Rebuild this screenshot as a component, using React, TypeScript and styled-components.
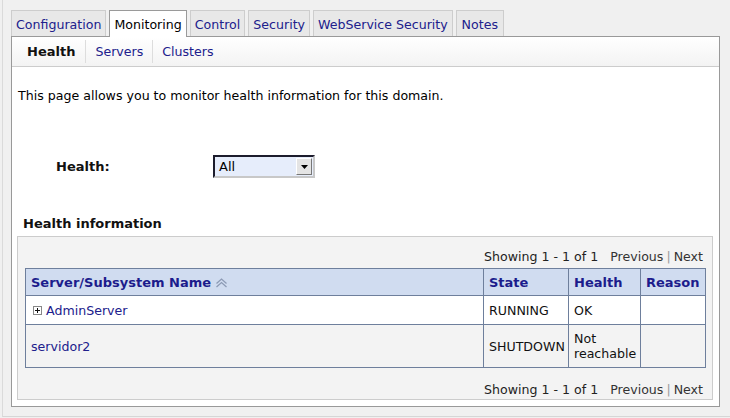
import React from "react";
import styled, { createGlobalStyle } from "styled-components";

const Global = createGlobalStyle`
  html, body { margin: 0; padding: 0; background: #f0f0f0; }
  body { font-family: "DejaVu Sans", Verdana, sans-serif; font-size: 12.6px; color: #000; }
  * { box-sizing: border-box; }
`;

const Frame = styled.div`
  margin-left: 2px;
  height: 417px;
  border-left: 1px solid #dadada;
  border-bottom: 1px solid #d6d6d6;
  padding: 10px 10px 0 8px;
`;

const TabBar = styled.div`
  display: flex;
  align-items: flex-end;
  gap: 3px;
  height: 26px;
`;

const Tab = styled.div<{ $active?: boolean }>`
  height: ${(p) => (p.$active ? "27px" : "26px")};
  margin-bottom: ${(p) => (p.$active ? "-1px" : "0")};
  position: relative;
  z-index: ${(p) => (p.$active ? 1 : 0)};
  padding: 0 4px;
  min-width: 48px;
  justify-content: center;
  display: flex;
  align-items: center;
  padding-top: 1px;
  padding-bottom: ${(p) => (p.$active ? "1px" : "0")};
  background: ${(p) => (p.$active ? "#ffffff" : "#e8e8e8")};
  border: 1px solid ${(p) => (p.$active ? "#9a9a9a" : "#cdcdcd")};
  border-bottom: none;
  color: ${(p) => (p.$active ? "#000" : "#20208c")};
  white-space: nowrap;
  line-height: 15px;
`;

const Panel = styled.div`
  border: 1px solid #999999;
  background: #ffffff;
  height: 371px;
  display: flex;
  flex-direction: column;
`;

const SubBar = styled.div`
  display: flex;
  align-items: center;
  height: 30px;
  padding-left: 5px;
  border-bottom: 1px solid #cccccc;
  background: linear-gradient(#ffffff, #f3f3f3);
`;

const SubTab = styled.div<{ $active?: boolean; $first?: boolean }>`
  padding: 0 9px 0 ${(p) => (p.$first ? "10px" : "9px")};
  padding-right: ${(p) => (p.$first ? "10px" : "9px")};
  border-left: ${(p) => (p.$first ? "none" : "1px solid #dddddd")};
  height: 23px;
  display: flex;
  align-items: center;
  font-weight: ${(p) => (p.$active ? "bold" : "normal")};
  font-size: ${(p) => (p.$active ? "13px" : "12.6px")};
  color: ${(p) => (p.$active ? "#111" : "#20208c")};
`;

const Content = styled.div`
  flex: 1;
  display: flex;
  flex-direction: column;
  padding: 0 6px 6px 5px;
`;

const Intro = styled.p`
  margin: 21px 0 0 1px;
  line-height: 15px;
`;

const FormRow = styled.div`
  display: flex;
  align-items: center;
  margin-top: 52px;
  height: 23px;
`;

const Label = styled.div`
  width: 157px;
  margin-left: 39px;
  font-weight: bold;
  font-size: 13px;
  color: #111;
`;

const SelectBox = styled.div`
  width: 102px;
  height: 23px;
  display: flex;
  align-items: stretch;
  border-top: 2px solid #1c1c2c;
  border-left: 2px solid #1c1c2c;
  border-right: 2px solid #c8c8c8;
  border-bottom: 2px solid #c8c8c8;
  background: #e6edfb;
`;

const SelectValue = styled.div`
  flex: 1;
  padding-left: 4px;
  display: flex;
  align-items: center;
  line-height: 15px;
  font-size: 13px;
`;

const SelectButton = styled.div`
  width: 16px;
  margin: 1px;
  background: #e4e4e4;
  border-top: 1px solid #ffffff;
  border-left: 1px solid #ffffff;
  border-right: 1px solid #777;
  border-bottom: 1px solid #777;
  display: flex;
  align-items: center;
  justify-content: center;
`;

const Heading = styled.h3`
  margin: 38px 0 0 6px;
  font-size: 13px;
  font-weight: bold;
  line-height: 15px;
  color: #111;
`;

const InfoBox = styled.div`
  margin-top: 5px;
  border: 1px solid #cccccc;
  background: #f3f3f3;
  padding: 0 6px 2px 7px;
`;

const Pager = styled.div<{ $bottom?: boolean }>`
  display: flex;
  justify-content: flex-end;
  align-items: center;
  line-height: 15px;
  height: 15px;
  color: #222;
  padding-right: 3px;
  margin-top: ${(p) => (p.$bottom ? "14px" : "12px")};
  margin-bottom: ${(p) => (p.$bottom ? "0" : "4px")};
`;

const PagerNav = styled.span`
  margin-left: 12px;
  color: #333;
`;

const Sep = styled.span`
  color: #999;
  margin: 0 3px;
`;

const Table = styled.table`
  width: 100%;
  border-collapse: collapse;
  table-layout: fixed;
  border: 1px solid #6e7f9c;
`;

const Th = styled.th<{ $w?: number }>`
  width: ${(p) => (p.$w ? `${p.$w}px` : "auto")};
  height: 27px;
  padding: 0 5px;
  text-align: left;
  background: #d0dcf0;
  color: #1c1c8c;
  font-weight: bold;
  font-size: 13px;
  border: 1px solid #6e7f9c;
  white-space: nowrap;
  line-height: 15px;
`;

const Tr = styled.tr<{ $alt?: boolean; $h: number }>`
  background: ${(p) => (p.$alt ? "#f3f3f3" : "#ffffff")};
  height: ${(p) => p.$h}px;
`;

const Td = styled.td`
  padding: 0 4px 0 5px;
  border: 1px solid #6e7f9c;
  line-height: 15px;
  color: #111;
  vertical-align: middle;
`;

const LinkText = styled.span`
  color: #20208c;
`;

const NameCell = styled.span`
  display: inline-flex;
  align-items: center;
  gap: 4px;
`;

const SortIcon = () => (
  <svg width="13" height="10" viewBox="0 0 13 10" style={{ marginLeft: 4, verticalAlign: "-1px" }}>
    <path d="M1.5 5.5 L6.5 1 L11.5 5.5 M1.5 9 L6.5 4.5 L11.5 9" fill="none" stroke="#8d9bb5" strokeWidth="1.3" />
  </svg>
);

const ExpandIcon = () => (
  <svg width="9" height="9" viewBox="0 0 9 9" style={{ marginLeft: 2 }}>
    <rect x="0.5" y="0.5" width="8" height="8" fill="#fff" stroke="#888" />
    <path d="M2 4.5 H7 M4.5 2 V7" stroke="#111" strokeWidth="1" />
  </svg>
);

const Arrow = () => (
  <svg width="7" height="4" viewBox="0 0 7 4">
    <path d="M0 0 H7 L3.5 4 Z" fill="#000" />
  </svg>
);

const PagerLine = ({ bottom }: { bottom?: boolean }) => (
  <Pager $bottom={bottom}>
    <span>Showing 1 - 1 of 1</span>
    <PagerNav>
      Previous<Sep>|</Sep>Next
    </PagerNav>
  </Pager>
);

export default function App() {
  const tabs = ["Configuration", "Monitoring", "Control", "Security", "WebService Security", "Notes"];
  return (
    <>
      <Global />
      <Frame>
        <TabBar>
          {tabs.map((t) => (
            <Tab key={t} $active={t === "Monitoring"}>
              {t}
            </Tab>
          ))}
        </TabBar>
        <Panel>
          <SubBar>
            <SubTab $active $first>
              Health
            </SubTab>
            <SubTab>Servers</SubTab>
            <SubTab>Clusters</SubTab>
          </SubBar>
          <Content>
            <Intro>This page allows you to monitor health information for this domain.</Intro>
            <FormRow>
              <Label>Health:</Label>
              <SelectBox>
                <SelectValue>All</SelectValue>
                <SelectButton>
                  <Arrow />
                </SelectButton>
              </SelectBox>
            </FormRow>
            <Heading>Health information</Heading>
            <InfoBox>
              <PagerLine />
              <Table>
                <thead>
                  <tr>
                    <Th>
                      Server/Subsystem Name
                      <SortIcon />
                    </Th>
                    <Th $w={85}>State</Th>
                    <Th $w={72}>Health</Th>
                    <Th $w={65}>Reason</Th>
                  </tr>
                </thead>
                <tbody>
                  <Tr $h={29}>
                    <Td>
                      <NameCell>
                        <ExpandIcon />
                        <LinkText>AdminServer</LinkText>
                      </NameCell>
                    </Td>
                    <Td>RUNNING</Td>
                    <Td>OK</Td>
                    <Td></Td>
                  </Tr>
                  <Tr $h={43} $alt>
                    <Td>
                      <LinkText>servidor2</LinkText>
                    </Td>
                    <Td>SHUTDOWN</Td>
                    <Td>Not reachable</Td>
                    <Td></Td>
                  </Tr>
                </tbody>
              </Table>
              <PagerLine bottom />
            </InfoBox>
          </Content>
        </Panel>
      </Frame>
    </>
  );
}
